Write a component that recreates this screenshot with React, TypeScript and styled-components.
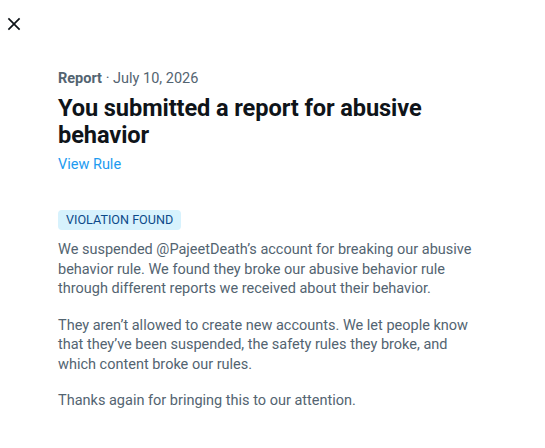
import styled, { createGlobalStyle } from "styled-components";

const Global = createGlobalStyle`
  body {
    margin: 0;
    background: #ffffff;
    font-family: Roboto, "Noto Sans", sans-serif;
    -webkit-font-smoothing: antialiased;
  }
`;

const Page = styled.div`
  width: 545px;
  height: 448px;
  display: flex;
  flex-direction: column;
  background: #ffffff;
`;

const TopBar = styled.div`
  height: 48px;
  display: flex;
  align-items: flex-start;
  padding: 14px 0 0 4px;
  box-sizing: border-box;
`;

const CloseButton = styled.button`
  width: 20px;
  height: 20px;
  padding: 0;
  border: 0;
  background: none;
  color: #0f1419;
  cursor: pointer;
  display: flex;

  svg {
    width: 20px;
    height: 20px;
    fill: currentColor;
  }
`;

const Content = styled.div`
  display: flex;
  flex-direction: column;
  padding: 21px 0 0 58px;
  width: 478px;
  box-sizing: border-box;
`;

const Meta = styled.div`
  font-size: 14.5px;
  line-height: 20px;
  color: #536471;

  strong {
    font-weight: 700;
  }
`;

const Title = styled.h1`
  margin: 6px 0 0;
  font-size: 23.6px;
  line-height: 27px;
  font-weight: 700;
  color: #0f1419;
  letter-spacing: -0.1px;
`;

const RuleLink = styled.a`
  margin-top: 6px;
  font-size: 14.5px;
  line-height: 20px;
  color: #1d9bf0;
  text-decoration: none;
  cursor: pointer;
  align-self: flex-start;
`;

const Badge = styled.span`
  margin-top: 35px;
  align-self: flex-start;
  padding: 0 8px;
  height: 20px;
  line-height: 20px;
  border-radius: 4px;
  background: #d7f2fd;
  color: #0d4a8a;
  font-size: 12.6px;
`;

const Body = styled.div`
  margin-top: 10px;
  display: flex;
  flex-direction: column;
  gap: 17px;
`;

const Paragraph = styled.p`
  margin: 0;
  font-size: 14.5px;
  line-height: 19.5px;
  color: #536471;
`;

const CloseIcon = () => (
  <svg viewBox="0 0 24 24" aria-hidden="true">
    <path d="M10.59 12L4.54 5.96l1.42-1.42L12 10.59l6.04-6.05 1.42 1.42L13.41 12l6.05 6.04-1.42 1.42L12 13.41l-6.04 6.05-1.42-1.42L10.59 12z" />
  </svg>
);

export default function App() {
  return (
    <Page>
      <Global />
      <TopBar>
        <CloseButton aria-label="Close">
          <CloseIcon />
        </CloseButton>
      </TopBar>
      <Content>
        <Meta>
          <strong>Report</strong> · July 10, 2026
        </Meta>
        <Title>You submitted a report for abusive behavior</Title>
        <RuleLink>View Rule</RuleLink>
        <Badge>VIOLATION FOUND</Badge>
        <Body>
          <Paragraph>
            We suspended @PajeetDeath’s account for breaking our abusive
            behavior rule. We found they broke our abusive behavior rule
            through different reports we received about their behavior.
          </Paragraph>
          <Paragraph>
            They aren’t allowed to create new accounts. We let people know
            that they’ve been suspended, the safety rules they broke, and
            which content broke our rules.
          </Paragraph>
          <Paragraph>Thanks again for bringing this to our attention.</Paragraph>
        </Body>
      </Content>
    </Page>
  );
}
